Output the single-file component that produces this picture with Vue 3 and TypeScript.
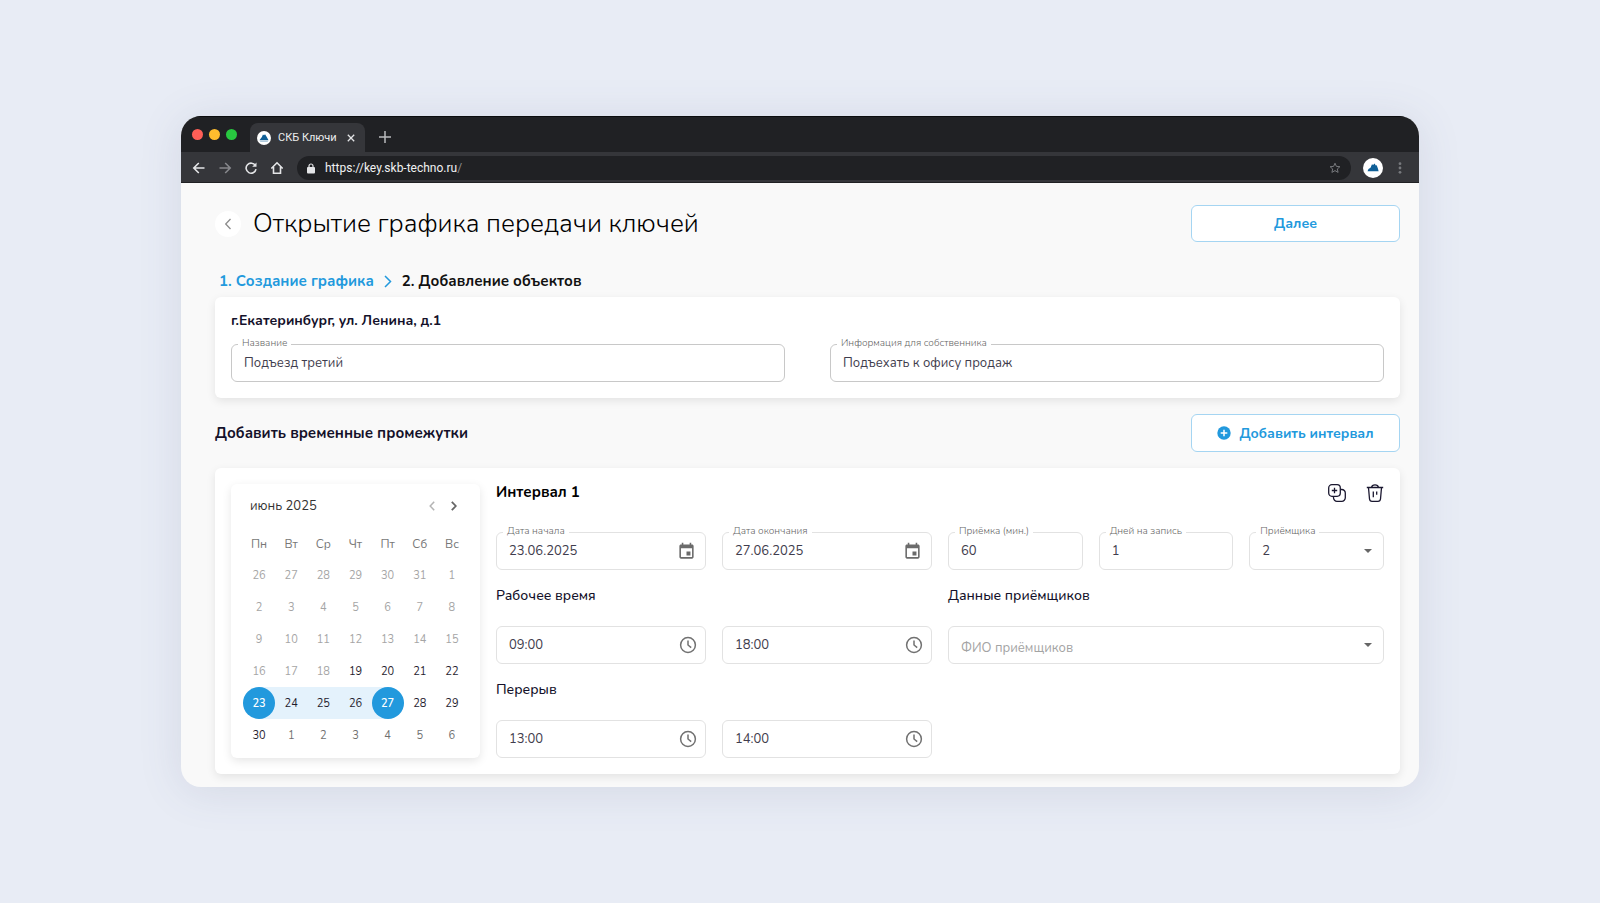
<script setup lang="ts">
import { computed, ref } from 'vue'

interface Day {
  n: number
  tone: 'past' | 'open' | 'next'
  index: number
}

const weekdays = ['Пн', 'Вт', 'Ср', 'Чт', 'Пт', 'Сб', 'Вс']
const rangeStart = 28
const rangeEnd = 32

const weeks = computed<Day[][]>(() => {
  const rows: Day[][] = []
  for (let w = 0; w < 6; w++) {
    const row: Day[] = []
    for (let d = 0; d < 7; d++) {
      const index = w * 7 + d
      let n = index - 5
      if (n < 1) n += 31
      else if (n > 30) n -= 30
      const tone = index < 24 ? 'past' : index > 35 ? 'next' : 'open'
      row.push({ n, tone, index })
    }
    rows.push(row)
  }
  return rows
})

function cellClass(day: Day) {
  return {
    start: day.index === rangeStart,
    end: day.index === rangeEnd,
    between: day.index > rangeStart && day.index < rangeEnd,
  }
}

const title = ref('Подъезд третий')
const info = ref('Подъехать к офису продаж')
const dates = ref([
  { id: 'date-from', label: 'Дата начала', value: '23.06.2025' },
  { id: 'date-to', label: 'Дата окончания', value: '27.06.2025' },
])
const numbers = ref([
  { id: 'duration', label: 'Приёмка (мин.)', value: '60' },
  { id: 'days', label: 'Дней на запись', value: '1' },
])
const work = ref([
  { id: 'work-from', label: 'Начало рабочего времени', value: '09:00' },
  { id: 'work-to', label: 'Конец рабочего времени', value: '18:00' },
])
const pause = ref([
  { id: 'break-from', label: 'Начало перерыва', value: '13:00' },
  { id: 'break-to', label: 'Конец перерыва', value: '14:00' },
])
const receivers = ref('2')
const person = ref('')
</script>

<template>
  <main class="page">
    <div class="window">
      <div class="tabs">
        <div class="lights"><i class="red"></i><i class="yellow"></i><i class="green"></i></div>
        <div class="tab">
          <svg class="favicon" viewBox="0 0 20 20" aria-hidden="true">
            <circle cx="10" cy="10" r="10" fill="#fff" />
            <path d="M3.500 13.200 7 8.500l1.500-3.500 1.500 1 1.500-1.300 2 3 3 5.500z" fill="#0f5f97" />
            <path d="M4.500 15h11" stroke="#8fb4cf" stroke-width="1" />
          </svg>
          <span>СКБ Ключи</span>
          <button class="bare" type="button" aria-label="Закрыть вкладку">
            <svg width="8" height="8" viewBox="0 0 8 8"><path d="M.8.8l6.400 6.400M7.200.8.8 7.200" stroke="#e4e5e7" stroke-width="1.300" /></svg>
          </button>
        </div>
        <button class="bare plus" type="button" aria-label="Новая вкладка">
          <svg width="12" height="12" viewBox="0 0 12 12"><path d="M6 0v12M0 6h12" stroke="#b9babd" stroke-width="1.500" /></svg>
        </button>
      </div>

      <div class="toolbar">
        <nav class="nav" aria-label="Навигация">
          <button class="bare" type="button" aria-label="Назад">
            <svg width="16" height="16" viewBox="0 0 16 16" class="line light"><path d="M13.500 8H3M7.800 3 2.800 8l5 5" /></svg>
          </button>
          <button class="bare" type="button" aria-label="Вперёд">
            <svg width="16" height="16" viewBox="0 0 16 16" class="line dim"><path d="M2.500 8H13M8.200 3l5 5-5 5" /></svg>
          </button>
          <button class="bare" type="button" aria-label="Обновить">
            <svg width="16" height="16" viewBox="0 0 16 16" class="line light"><path d="M12.400 5.600A5 5 0 1 0 13 9.200" /><path d="M13.500 2.500v4.300H9.200z" fill="#e4e5e7" stroke="none" /></svg>
          </button>
          <button class="bare" type="button" aria-label="Домой">
            <svg width="16" height="16" viewBox="0 0 16 16" class="line light"><path d="M2.300 8.500 8 2.800l5.700 5.700M4.500 7v6.300h7V7" /></svg>
          </button>
        </nav>
        <div class="address">
          <svg width="8" height="11" viewBox="0 0 8 11" aria-hidden="true"><rect y="4" width="8" height="6.500" rx="1" fill="#e4e5e7" /><path d="M2 4.500V3a2 2 0 0 1 4 0v1.500" fill="none" stroke="#e4e5e7" stroke-width="1.200" /></svg>
          <span class="url">https://key.skb-techno.ru<em>/</em></span>
          <button class="bare" type="button" aria-label="В закладки">
            <svg width="12" height="12" viewBox="0 0 12 12"><path d="m6 1.200 1.400 3.200 3.500.3-2.600 2.300.8 3.400L6 8.600l-3.100 1.800.8-3.400L1.100 4.700l3.500-.3z" fill="none" stroke="#77797d" /></svg>
          </button>
        </div>
        <svg class="avatar" viewBox="0 0 20 20" aria-hidden="true">
          <circle cx="10" cy="10" r="10" fill="#fff" />
          <path d="M4.500 13.200 5.500 11l2-1.200 1.500-3.500 1.100.8 1.400-1.600 1.300 2 .9-.2 1.300 3.400.6 2.500z" fill="#0f5f97" />
        </svg>
        <button class="bare" type="button" aria-label="Меню">
          <svg width="10" height="12" viewBox="0 0 10 12"><g fill="#77797d"><circle cx="5" cy="1.700" r="1.400" /><circle cx="5" cy="6" r="1.400" /><circle cx="5" cy="10.300" r="1.400" /></g></svg>
        </button>
      </div>

      <div class="content">
        <header class="head">
          <button class="back" type="button" aria-label="Назад к списку">
            <svg width="8" height="12" viewBox="0 0 8 12"><path d="M6.500 1 1.700 6l4.800 5" fill="none" stroke="#8c8c8c" stroke-width="1.300" /></svg>
          </button>
          <h1>Открытие графика передачи ключей</h1>
          <button class="outline" type="button">Далее</button>
        </header>

        <nav class="steps" aria-label="Шаги">
          <a href="#step-1">1. Создание графика</a>
          <svg width="8" height="13" viewBox="0 0 8 13" aria-hidden="true"><path d="m1 1 5.500 5.500L1 12" fill="none" stroke="#2299dd" stroke-width="1.500" /></svg>
          <span>2. Добавление объектов</span>
        </nav>

        <section class="card object">
          <h2>г.Екатеринбург, ул. Ленина, д.1</h2>
          <div class="pair">
            <div class="field dark">
              <input id="title" v-model="title" type="text" />
              <label for="title">Название</label>
            </div>
            <div class="field dark">
              <input id="info" v-model="info" type="text" />
              <label for="info">Информация для собственника</label>
            </div>
          </div>
        </section>

        <div class="bar">
          <h2>Добавить временные промежутки</h2>
          <button class="outline" type="button">
            <svg width="14" height="14" viewBox="0 0 14 14" aria-hidden="true"><circle cx="7" cy="7" r="6.700" fill="#2299dd" /><path d="M7 3.700v6.600M3.700 7h6.600" stroke="#fff" stroke-width="1.500" /></svg>
            Добавить интервал
          </button>
        </div>

        <section class="card interval">
          <div class="calendar">
            <div class="month">
              <span>июнь 2025</span>
              <button class="bare" type="button" aria-label="Предыдущий месяц">
                <svg width="6" height="10" viewBox="0 0 6 10"><path d="M5.200.8 1.200 5l4 4.200" fill="none" stroke="#b4b4b4" stroke-width="1.500" /></svg>
              </button>
              <button class="bare" type="button" aria-label="Следующий месяц">
                <svg width="6" height="10" viewBox="0 0 6 10"><path d="m.8.8 4 4.200-4 4.200" fill="none" stroke="#666" stroke-width="1.800" /></svg>
              </button>
            </div>
            <table>
              <thead>
                <tr><th v-for="d in weekdays" :key="d" scope="col">{{ d }}</th></tr>
              </thead>
              <tbody>
                <tr v-for="(week, w) in weeks" :key="w">
                  <td v-for="day in week" :key="day.index" :class="cellClass(day)">
                    <button type="button" class="day" :class="day.tone">{{ day.n }}</button>
                  </td>
                </tr>
              </tbody>
            </table>
          </div>

          <div class="form">
            <div class="form-head">
              <h3>Интервал 1</h3>
              <button class="bare" type="button" aria-label="Дублировать">
                <svg width="18" height="18" viewBox="0 0 18 18" class="ink"><rect x=".7" y=".7" width="11.600" height="11.600" rx="3.200" /><path d="M6.500 3.800v5.400M3.800 6.500h5.400M12.800 5.500h1a3.500 3.500 0 0 1 3.500 3.500v4.800a3.500 3.500 0 0 1-3.500 3.500H9a3.500 3.500 0 0 1-3.500-3.500v-1" /></svg>
              </button>
              <button class="bare" type="button" aria-label="Удалить">
                <svg width="18" height="18" viewBox="0 0 18 18" class="ink"><path d="M.8 3.500h16.400M5.500 3.300C5.800 1.500 6.500.8 9 .8s3.200.7 3.500 2.500M2.500 3.700l1 11.300c.2 1.600.9 2.300 2.500 2.300h6c1.600 0 2.300-.7 2.500-2.300l1-11.300M7.300 7.500v5.800M10.700 7.500v3.300" /></svg>
              </button>
            </div>

            <div class="grid">
              <div v-for="f in dates" :key="f.id" class="field">
                <input :id="f.id" v-model="f.value" type="text" />
                <label :for="f.id">{{ f.label }}</label>
                <svg class="date-icon" viewBox="0 0 24 24" aria-hidden="true"><path fill="#6b6b6b" d="M19 3h-1V1h-2v2H8V1H6v2H5c-1.100 0-2 .9-2 2v14c0 1.100.9 2 2 2h14c1.100 0 2-.9 2-2V5c0-1.100-.9-2-2-2zm0 16H5V8h14v11zM12 12h5v5h-5z" /></svg>
              </div>
              <div class="trio">
                <div v-for="f in numbers" :key="f.id" class="field">
                  <input :id="f.id" v-model="f.value" type="text" />
                  <label :for="f.id">{{ f.label }}</label>
                </div>
                <div class="field">
                  <select id="receivers" v-model="receivers">
                    <option>1</option>
                    <option>2</option>
                    <option>3</option>
                  </select>
                  <label for="receivers">Приёмщика</label>
                  <svg class="arrow" viewBox="0 0 8 4" aria-hidden="true"><path d="M0 0h8L4 4z" fill="#666" /></svg>
                </div>
              </div>

              <h4 class="wide">Рабочее время</h4>
              <h4>Данные приёмщиков</h4>

              <div v-for="f in work" :key="f.id" class="field">
                <input :id="f.id" v-model="f.value" type="text" :aria-label="f.label" />
                <svg class="clock" viewBox="0 0 18 18" aria-hidden="true"><circle cx="9" cy="9" r="7.400" /><path d="M9 4.500V9l3.200 2.600" /></svg>
              </div>
              <div class="field">
                <select id="person" v-model="person" class="empty" aria-label="ФИО приёмщиков">
                  <option value="" disabled>ФИО приёмщиков</option>
                </select>
                <svg class="arrow" viewBox="0 0 8 4" aria-hidden="true"><path d="M0 0h8L4 4z" fill="#666" /></svg>
              </div>

              <h4 class="full">Перерыв</h4>
              <div v-for="f in pause" :key="f.id" class="field">
                <input :id="f.id" v-model="f.value" type="text" :aria-label="f.label" />
                <svg class="clock" viewBox="0 0 18 18" aria-hidden="true"><circle cx="9" cy="9" r="7.400" /><path d="M9 4.500V9l3.200 2.600" /></svg>
              </div>
            </div>
          </div>
        </section>
      </div>
    </div>
  </main>
</template>

<style>
body {
  margin: 0;
  background: #e8ecf5;
}
</style>

<style scoped>
* {
  box-sizing: border-box;
}
svg {
  display: block;
  flex: none;
}
h1,
h2,
h3,
h4 {
  margin: 0;
}
button,
input,
select {
  font: inherit;
  color: inherit;
}
button {
  cursor: pointer;
}
.bare {
  padding: 0;
  border: 0;
  background: none;
}

.page {
  display: flex;
  align-items: center;
  min-height: 100vh;
  padding: 24px 181px;
  font-family: Nunito, "Open Sans", sans-serif;
  font-size: 13px;
  color: #14112a;
}
.window {
  flex: 1;
  min-width: 0;
  overflow: hidden;
  border-radius: 20px;
  background: #f9f9f9;
  box-shadow: 0 4px 44px rgba(75, 85, 120, 0.13);
}

/* Browser chrome */
.tabs {
  display: flex;
  align-items: flex-end;
  height: 36px;
  padding-left: 11px;
  background: #202124;
  border-top: 1px solid #0c0d0f;
}
.lights {
  display: flex;
  gap: 6px;
  margin-right: 13px;
  padding-bottom: 12px;
}
.lights i {
  width: 11px;
  height: 11px;
  border-radius: 50%;
}
.red {
  background: #ff5f57;
}
.yellow {
  background: #febc2e;
}
.green {
  background: #28c840;
}
.tab {
  display: flex;
  align-items: center;
  height: 29px;
  padding: 0 10px 0 7px;
  border-radius: 8px 8px 0 0;
  background: #35363a;
  color: #eceded;
  font-family: Roboto, sans-serif;
  font-size: 11px;
}
.favicon {
  width: 14px;
  height: 14px;
  margin-right: 7px;
}
.tab .bare {
  margin-left: 10px;
}
.plus {
  margin: 0 0 9px 14px;
}
.toolbar {
  display: flex;
  align-items: center;
  gap: 12px;
  height: 31px;
  padding: 2px 14px 0 10px;
  background: #35363a;
  border-bottom: 1px solid #202124;
}
.nav {
  display: flex;
  gap: 10px;
}
.line {
  fill: none;
  stroke-width: 1.6;
}
.light {
  stroke: #e4e5e7;
}
.dim {
  stroke: #86878b;
}
.address {
  display: flex;
  flex: 1;
  align-items: center;
  height: 24px;
  padding: 0 10px;
  border-radius: 12px;
  background: #202124;
  color: #f1f1f2;
  font-family: Roboto, sans-serif;
  font-size: 12px;
}
.url {
  flex: 1;
  margin-left: 10px;
}
.url em {
  color: #8b8c8f;
  font-style: normal;
}
.avatar {
  width: 20px;
  height: 20px;
}

/* Page */
.content {
  padding: 22px 19px 13px 34px;
}
.head {
  display: flex;
  align-items: center;
  height: 37px;
  margin-bottom: 29px;
}
.head .outline {
  height: 100%;
}
.back {
  display: grid;
  place-items: center;
  width: 26px;
  height: 26px;
  padding: 0;
  border: 0;
  border-radius: 50%;
  background: #fff;
}
h1 {
  flex: 1;
  margin-left: 12px;
  font-size: 26px;
  font-weight: 300;
  line-height: 36px;
  color: #000;
}
.outline {
  display: flex;
  align-items: center;
  justify-content: center;
  gap: 8px;
  width: 209px;
  height: 38px;
  padding: 0;
  border: 1px solid #a5d5f2;
  border-radius: 6px;
  background: #fff;
  color: #2299dd;
  font-size: 14px;
  font-weight: 700;
}
.steps {
  display: flex;
  align-items: center;
  gap: 10px;
  margin-bottom: 6px;
  padding-left: 4px;
  font-size: 15px;
  font-weight: 700;
  line-height: 20px;
  color: #111;
}
.steps a {
  color: #2299dd;
  text-decoration: none;
}
.card {
  padding: 16px;
  border-radius: 6px;
  background: #fff;
  box-shadow: 0 3px 10px rgba(0, 0, 0, 0.09);
}
.object {
  padding-top: 14px;
}
.object h2 {
  margin-bottom: 13px;
  font-size: 14px;
  font-weight: 700;
  line-height: 20px;
}
.pair {
  display: grid;
  grid-template-columns: 1fr 1fr;
  gap: 45px;
}
.field {
  position: relative;
  height: 38px;
}
.field input,
.field select {
  display: block;
  width: 100%;
  height: 100%;
  padding: 0 12px;
  border: 1px solid #e2e2e2;
  border-radius: 6px;
  outline: none;
  background: #fff;
  color: #3f3d4d;
  appearance: none;
}
.field.dark input {
  border-color: #c8c8c8;
}
.field .empty {
  padding-top: 5px;
  color: #a3a3a3;
}
.field label {
  position: absolute;
  top: -8px;
  left: 7px;
  padding: 0 4px;
  background: #fff;
  color: #666;
  font-size: 10px;
  font-weight: 300;
  line-height: 14px;
}
.field svg {
  position: absolute;
  top: 0;
  bottom: 0;
  margin: auto 0;
  pointer-events: none;
}
.date-icon {
  right: 10px;
  width: 19px;
  height: 19px;
}
.clock {
  right: 9px;
  width: 18px;
  height: 18px;
  fill: none;
  stroke: #717171;
  stroke-width: 1.5;
}
.arrow {
  right: 12px;
  width: 8px;
  height: 4px;
}
.bar {
  display: flex;
  align-items: center;
  justify-content: space-between;
  margin: 16px 0;
}
.bar h2 {
  font-size: 15px;
  font-weight: 700;
  line-height: 20px;
}

/* Interval */
.interval {
  display: grid;
  grid-template-columns: 249px minmax(0, 1fr);
  gap: 16px;
}
.calendar {
  padding: 12px 12px 7px;
  border-radius: 6px;
  box-shadow: 0 3px 10px rgba(0, 0, 0, 0.1);
}
.month {
  display: flex;
  align-items: center;
  gap: 16px;
  height: 20px;
  margin-bottom: 13px;
  padding: 0 11px 0 7px;
  color: #333;
}
.month span {
  flex: 1;
}
table {
  width: 100%;
  border-collapse: collapse;
  table-layout: fixed;
}
th {
  height: 30px;
  padding: 0;
  color: #777;
  font-size: 12px;
  font-weight: 400;
}
td {
  height: 32px;
  padding: 0;
}
.day {
  display: block;
  width: 32px;
  height: 32px;
  margin: 0 auto;
  padding: 0;
  border: 0;
  border-radius: 50%;
  background: none;
  font-size: 11px;
}
.past {
  color: #a5a5a5;
}
.next {
  color: #6f6f6f;
}
.open {
  color: #1f1c2e;
}
.between {
  background: #e4f2fc;
}
.start {
  background: linear-gradient(to right, transparent 50%, #e4f2fc 50%);
}
.end {
  background: linear-gradient(to left, transparent 50%, #e4f2fc 50%);
}
.start .day,
.end .day {
  background: #2299dd;
  color: #fff;
  font-weight: 600;
}
.form-head {
  display: flex;
  gap: 20px;
  height: 18px;
  margin-bottom: 30px;
}
h3 {
  flex: 1;
  font-size: 15px;
  font-weight: 700;
  line-height: 16px;
  color: #000;
}
.ink {
  fill: none;
  stroke: #1b1830;
  stroke-width: 1.3;
}
.grid {
  display: grid;
  grid-template-columns: 210fr 210fr 436fr;
  column-gap: 16px;
}
.trio {
  display: grid;
  grid-template-columns: repeat(3, minmax(0, 1fr));
  gap: 16px;
}
h4 {
  margin: 16px 0 20px;
  font-size: 14px;
  font-weight: 500;
  line-height: 20px;
}
.wide {
  grid-column: span 2;
}
.full {
  grid-column: 1 / -1;
}

@media (max-width: 1300px) {
  .page {
    padding: 24px;
  }
}
</style>
